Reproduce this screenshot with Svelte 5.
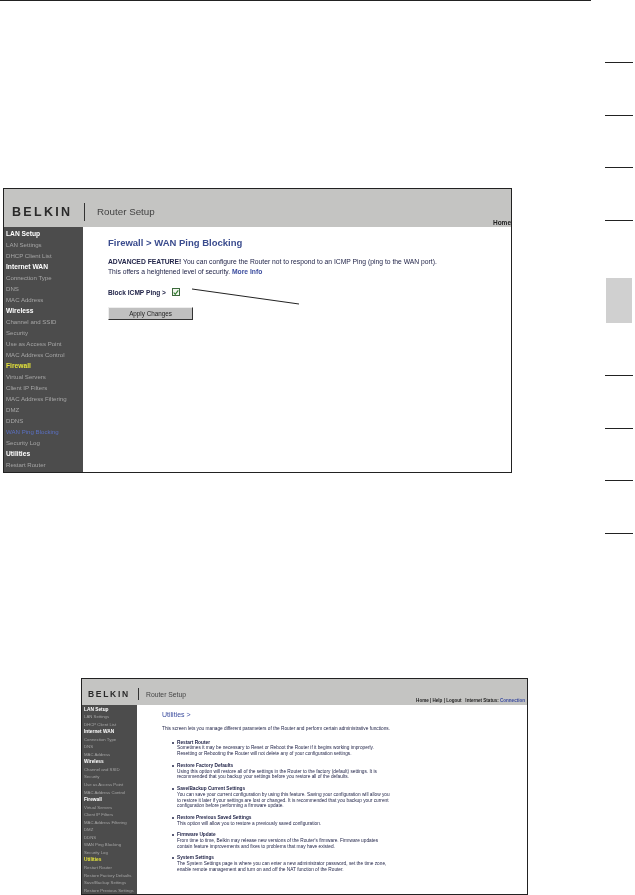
<script>
  const nav1 = [
    ['LAN Setup', 'head'], ['LAN Settings', ''], ['DHCP Client List', ''],
    ['Internet WAN', 'head'], ['Connection Type', ''], ['DNS', ''], ['MAC Address', ''],
    ['Wireless', 'head'], ['Channel and SSID', ''], ['Security', ''], ['Use as Access Point', ''], ['MAC Address Control', ''],
    ['Firewall', 'head yellow'], ['Virtual Servers', ''], ['Client IP Filters', ''], ['MAC Address Filtering', ''],
    ['DMZ', ''], ['DDNS', ''], ['WAN Ping Blocking', 'blue'], ['Security Log', ''],
    ['Utilities', 'head'], ['Restart Router', '']
  ];
  const nav2 = [
    ['LAN Setup', 'head'], ['LAN Settings', ''], ['DHCP Client List', ''],
    ['Internet WAN', 'head'], ['Connection Type', ''], ['DNS', ''], ['MAC Address', ''],
    ['Wireless', 'head'], ['Channel and SSID', ''], ['Security', ''], ['Use as Access Point', ''], ['MAC Address Control', ''],
    ['Firewall', 'head'], ['Virtual Servers', ''], ['Client IP Filters', ''], ['MAC Address Filtering', ''],
    ['DMZ', ''], ['DDNS', ''], ['WAN Ping Blocking', ''], ['Security Log', ''],
    ['Utilities', 'head yellow'], ['Restart Router', ''], ['Restore Factory Defaults', ''],
    ['Save/Backup Settings', ''], ['Restore Previous Settings', '']
  ];
  const utilities = [
    { title: 'Restart Router', lines: ['Sometimes it may be necessary to Reset or Reboot the Router if it begins working improperly.', 'Resetting or Rebooting the Router will not delete any of your configuration settings.'] },
    { title: 'Restore Factory Defaults', lines: ['Using this option will restore all of the settings in the Router to the factory (default) settings. It is', 'recommended that you backup your settings before you restore all of the defaults.'] },
    { title: 'Save/Backup Current Settings', lines: ['You can save your current configuration by using this feature. Saving your configuration will allow you', 'to restore it later if your settings are lost or changed. It is recommended that you backup your current', 'configuration before performing a firmware update.'] },
    { title: 'Restore Previous Saved Settings', lines: ['This option will allow you to restore a previously saved configuration.'] },
    { title: 'Firmware Update', lines: ['From time to time, Belkin may release new versions of the Router\'s firmware. Firmware updates', 'contain feature improvements and fixes to problems that may have existed.'] },
    { title: 'System Settings', lines: ['The System Settings page is where you can enter a new administrator password, set the time zone,', 'enable remote management and turn on and off the NAT function of the Router.'] }
  ];
  const rulesTop = [0, 1, 2, 3];
  const rulesBottom = [0, 1, 2, 3];
</script>

<div class="page">
  <main class="doc">
    <div class="toprule"></div>

    <section class="shot one">
      <header class="bar">
        <div class="brand">BELKIN</div>
        <div class="divider"></div>
        <div class="product">Router Setup</div>
        <div class="links"><b>Home</b></div>
      </header>
      <div class="body">
        <nav class="side">
          {#each nav1 as [label, cls]}<div class="item {cls}">{label}</div>{/each}
        </nav>
        <div class="content">
          <h1>Firewall &gt; WAN Ping Blocking</h1>
          <p><b>ADVANCED FEATURE!</b> You can configure the Router not to respond to an ICMP Ping (ping to the WAN port).<br />
          This offers a heightened level of security. <b class="more">More Info</b></p>
          <div class="block">
            <b>Block ICMP Ping &gt;</b>
            <span class="check">
              <svg viewBox="0 0 8 8" width="7" height="7"><path d="M1 4l2 2.4L7 1.2" fill="none" stroke="#2f7d2f" stroke-width="1.5" /></svg>
            </span>
          </div>
          <button>Apply Changes</button>
          <svg class="leader" width="110" height="18"><line x1="1" y1="1" x2="108" y2="16" stroke="#222" stroke-width="1" /></svg>
        </div>
      </div>
    </section>

    <section class="shot two">
      <header class="bar">
        <div class="brand">BELKIN</div>
        <div class="divider"></div>
        <div class="product">Router Setup</div>
        <div class="links"><b>Home | Help | Logout &nbsp; Internet Status: <span>Connection</span></b></div>
      </header>
      <div class="body">
        <nav class="side">
          {#each nav2 as [label, cls]}<div class="item {cls}">{label}</div>{/each}
        </nav>
        <div class="content">
          <h2>Utilities &gt;</h2>
          <p class="intro">This screen lets you manage different parameters of the Router and perform certain administrative functions.</p>
          <ul>
            {#each utilities as u}
              <li>
                <b>{u.title}</b>
                {#each u.lines as l}<span>{l}</span>{/each}
              </li>
            {/each}
          </ul>
        </div>
      </div>
    </section>
  </main>

  <aside class="rail">
    {#each rulesTop as r}<div class="tick" data-r={r}></div>{/each}
    <div class="tab"></div>
    {#each rulesBottom as r}<div class="tick" data-r={r}></div>{/each}
  </aside>
</div>

<style>
  :global(body) { background: #fff; }
  .page {
    width: 635px;
    height: 895px;
    overflow: hidden;
    display: flex;
    background: #fff;
    font-family: "Liberation Sans", Arial, sans-serif;
  }
  .doc { width: 591px; flex: none; }
  .toprule { height: 1px; background: #222; }

  .shot {
    box-sizing: border-box;
    border: 1px solid #222;
    background: #fff;
    filter: blur(0.45px);
    display: flex;
    flex-direction: column;
  }
  .shot.one { width: 509px; height: 285px; margin: 187px 0 0 3px; }
  .shot.two { width: 447px; height: 217px; margin: 205px 0 0 81px; }

  .bar { background: #c4c4c2; display: flex; align-items: center; position: relative; flex: none; box-sizing: border-box; }
  .one .bar { height: 38px; padding: 7px 0 0 8px; }
  .two .bar { height: 26px; padding: 4px 0 0 6px; }
  .brand { font-weight: bold; color: #2a2a2a; }
  .one .brand { font-size: 12.5px; letter-spacing: 2.3px; width: 62px; }
  .two .brand { font-size: 8.5px; letter-spacing: 1.7px; width: 45px; }
  .divider { width: 1px; background: #333; }
  .one .divider { height: 18px; margin: 0 12px 0 10px; }
  .two .divider { height: 12px; margin: 0 7px 0 5px; }
  .product { color: #444; }
  .one .product { font-size: 9.8px; }
  .two .product { font-size: 6.8px; }
  .links { position: absolute; right: 0; bottom: 1px; color: #222; white-space: nowrap; }
  .one .links { font-size: 6.5px; }
  .two .links { font-size: 4.55px; right: 2px; bottom: 2px; }
  .links span { color: #3a4ba0; }

  .body { flex: 1; display: flex; min-height: 0; }
  .side { background: #4c4c4c; flex: none; overflow: hidden; box-sizing: border-box; }
  .one .side { width: 79px; padding: 1px 0 0 2px; }
  .two .side { width: 55px; padding: 0.5px 0 0 2px; }
  .item { color: #a6a6a6; white-space: nowrap; }
  .one .item { font-size: 6.1px; height: 11.03px; line-height: 11px; }
  .two .item { font-size: 4.3px; height: 7.55px; line-height: 7.5px; }
  .item.head { color: #fff; font-weight: bold; }
  .one .item.head { font-size: 6.7px; }
  .two .item.head { font-size: 4.8px; }
  .item.yellow { color: #e4e33a; }
  .item.blue { color: #5a6fc0; }

  .content { position: relative; flex: 1; color: #23264a; }
  .one .content { padding: 10px 0 0 25px; font-size: 6.75px; }
  h1 { margin: 0; font-size: 9.5px; line-height: 12px; font-weight: bold; color: #3b4c8e; }
  .one p { margin: 8px 0 0; line-height: 10px; white-space: nowrap; }
  .more { color: #3b4c9e; }
  .block { display: flex; align-items: center; gap: 6px; height: 11px; margin-top: 9.5px; font-size: 6.6px; }
  .check {
    box-sizing: border-box; width: 8px; height: 8px; border: 1px solid #3c6a3c; background: #f2f6ee;
    display: flex; align-items: center; justify-content: center;
  }
  button {
    display: block; box-sizing: border-box; width: 85px; height: 13px; margin: 9px 0 0; padding: 0;
    background: #c0c0c0; color: #222; font: 6.3px "Liberation Sans", Arial, sans-serif;
    border: 1px solid; border-color: #eee #333 #333 #eee;
  }
  .leader { position: absolute; left: 108px; top: 61px; }

  .two .content { padding: 5px 0 0 25px; font-size: 4.75px; }
  h2 { margin: 0; font-size: 7px; line-height: 9px; font-weight: normal; color: #3b4c9e; }
  .intro { margin: 7px 0 0; line-height: 6px; white-space: nowrap; }
  ul { list-style: none; margin: 7.5px 0 0; padding: 0 0 0 15px; }
  li { position: relative; margin-bottom: 5.4px; line-height: 5.9px; white-space: nowrap; }
  li::before {
    content: ""; position: absolute; left: -5.5px; top: 2px;
    width: 2px; height: 2px; border-radius: 50%; background: #23264a;
  }
  li b, li span { display: block; }

  .rail {
    width: 28px; margin-left: 14px; flex: none;
    display: flex; flex-direction: column; align-items: stretch;
  }
  .tick { height: 1px; background: #222; margin-bottom: 51.5px; flex: none; }
  .tick:first-child { margin-top: 62px; }
  .tab { height: 45px; margin: 6px 1px 52px; background: #d0d0d0; flex: none; }
</style>
